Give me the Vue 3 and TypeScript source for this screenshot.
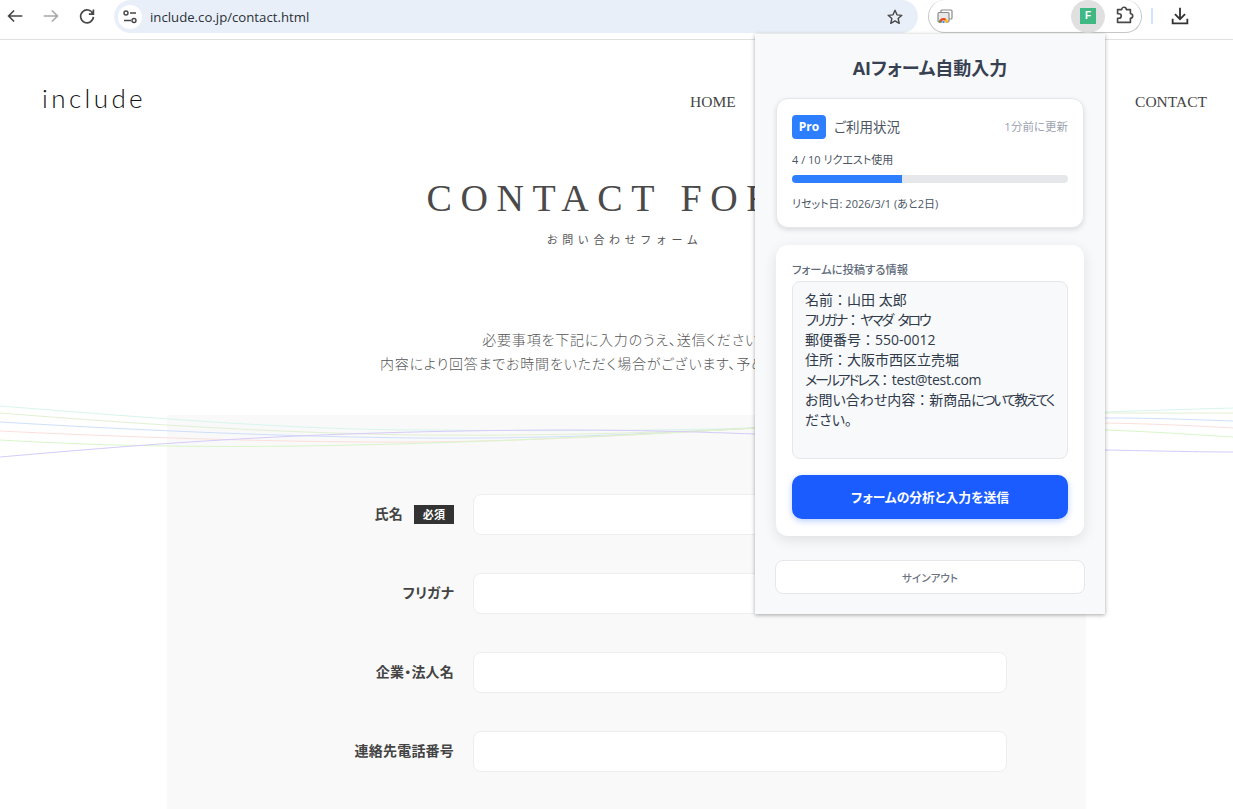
<script setup lang="ts">
import { ref } from 'vue'

const fields = [
  { label: '氏名', required: true },
  { label: 'フリガナ', required: false },
  { label: '企業・法人名', required: false },
  { label: '連絡先電話番号', required: false },
]

const waves = [
  { d: 'M0 406 C150 418 300 430 420 430 C540 431 640 431 755 428 C900 420 1000 414 1105 412 C1160 410 1200 409 1233 408', color: '#d8f5ed' },
  { d: 'M0 413 C150 425 280 433 420 435 C540 436 650 433 755 428 C900 418 1000 413 1105 413 L1233 413', color: '#e2f0d2' },
  { d: 'M0 422 C150 431 300 437 420 438 C540 439 650 434 755 428 C900 420 1000 418 1105 418 C1160 418 1200 420 1233 421', color: '#cfdffa' },
  { d: 'M0 431 C120 437 300 443 420 442 C540 441 650 434 755 428 C900 424 1000 423 1105 423 C1160 424 1200 426 1233 428', color: '#fbe0dc' },
  { d: 'M0 440 C120 447 220 447 300 446 C450 444 620 436 755 428 C900 425 1000 428 1105 430 C1160 432 1200 435 1233 437', color: '#d9f6ca' },
  { d: 'M0 457 C150 444 300 431 560 430 C640 430 700 432 755 434 C900 442 1000 447 1105 450 C1160 451 1200 452 1233 452', color: '#d6cbfa' },
]

const used = ref(4)
const limit = ref(10)
</script>

<template>
  <div class="window">
    <div class="toolbar">
      <svg class="nav-icon" viewBox="0 0 24 24"><path d="M20 12H5M11 6l-6 6 6 6" fill="none" stroke="#474747" stroke-width="1.8" /></svg>
      <svg class="nav-icon" viewBox="0 0 24 24"><path d="M4 12h15M13 6l6 6-6 6" fill="none" stroke="#a8a8a8" stroke-width="1.8" /></svg>
      <svg class="nav-icon" viewBox="0 0 24 24"><path d="M18.4 9.5A7 7 0 1 0 19 13M19 5v5h-5" fill="none" stroke="#474747" stroke-width="1.8" /></svg>
      <div class="omnibox">
        <span class="site-info">
          <svg viewBox="0 0 16 16" width="16" height="16">
            <circle cx="4" cy="4" r="2" fill="none" stroke="#474747" stroke-width="1.4" />
            <path d="M8 4h6M2 11.500h7" stroke="#474747" stroke-width="1.4" />
            <circle cx="12" cy="11.500" r="2" fill="none" stroke="#474747" stroke-width="1.4" />
          </svg>
        </span>
        <span class="url">include.co.jp/contact.html</span>
        <svg class="star" viewBox="0 0 24 24"><path d="M12 4l2.400 5.400 5.800.6-4.400 3.900 1.300 5.700L12 16.700l-5.100 2.900 1.300-5.700L3.800 10l5.800-.6z" fill="none" stroke="#474747" stroke-width="1.700" stroke-linejoin="round" /></svg>
      </div>
      <div class="ext-pill">
        <svg class="tab-icon" viewBox="0 0 16 14">
          <rect x="4" y="1" width="11" height="9" rx="1" fill="#fff" stroke="#8a8a8a" stroke-width="1.200" />
          <rect x="1" y="3.500" width="11" height="9.500" rx="1" fill="#e8e8e8" stroke="#8a8a8a" stroke-width="1.200" />
          <path d="M2 13.500a4.500 4.500 0 0 1 9 0z" fill="#fbbc04" />
          <path d="M2 13.500a4.500 4.500 0 0 1 7-3.700l-2.500 3.700z" fill="#ea4335" />
          <path d="M2 13.500a4.500 4.500 0 0 1 .8-2.500l2 2.500z" fill="#34a853" />
          <circle cx="6.500" cy="13" r="1.800" fill="#fff" />
          <circle cx="6.500" cy="13" r="1.200" fill="#4285f4" />
        </svg>
        <span class="ext-active"><span class="ext-badge">F</span></span>
        <svg class="puzzle" viewBox="0 0 24 24"><path d="M5 5h4.500a2.500 2.500 0 0 1 5 0H19v4.500a2.500 2.500 0 0 1 0 5V19h-4.500H5v-4.500h1.500a2.500 2.500 0 0 0 0-5H5z" fill="none" stroke="#474747" stroke-width="1.800" stroke-linejoin="round" /></svg>
      </div>
      <span class="divider"></span>
      <svg class="download" viewBox="0 0 24 24"><path d="M12 3v12M6.500 10l5.500 5.500 5.500-5.500M4 15v5h16v-5" fill="none" stroke="#333" stroke-width="2" /></svg>
    </div>

    <div class="site">
      <svg class="waves" viewBox="0 0 1233 60" width="1233" height="60">
        <g transform="translate(0 -400)">
          <path v-for="w in waves" :key="w.color" :d="w.d" :stroke="w.color" fill="none" stroke-width="1" />
        </g>
      </svg>

      <header class="site-header">
        <span class="logo">include</span>
        <nav class="site-nav">
          <a>HOME</a>
          <a>CONTACT</a>
        </nav>
      </header>

      <h1 class="title">CONTACT FORM</h1>
      <p class="subtitle">お問い合わせフォーム</p>
      <p class="lead">必要事項を下記に入力のうえ、送信ください。<br />内容により回答までお時間をいただく場合がございます、予めご了承ください。</p>

      <section class="form">
        <div v-for="f in fields" :key="f.label" class="form-row">
          <div class="form-label">
            <span class="form-label-text">{{ f.label }}</span>
            <span v-if="f.required" class="required">必須</span>
          </div>
          <input class="form-input" type="text" />
        </div>
      </section>
    </div>

    <div class="popup">
      <h2 class="popup-title">AIフォーム自動入力</h2>

      <div class="card usage">
        <div class="usage-head">
          <span class="plan">Pro</span>
          <span class="usage-title">ご利用状況</span>
          <span class="updated">1分前に更新</span>
        </div>
        <div class="usage-count">{{ used }} / {{ limit }} リクエスト使用</div>
        <div class="bar"><div class="bar-fill" :style="{ width: (used / limit) * 100 + '%' }"></div></div>
        <div class="reset">リセット日: 2026/3/1 (あと2日)</div>
      </div>

      <div class="card post">
        <div class="post-label">フォームに投稿する情報</div>
        <div class="post-text">
          <div>名前<span class="colon">：</span>山田 太郎</div>
          <div><span class="kana">フリガナ</span><span class="colon">：</span><span class="kana">ヤマダ タロウ</span></div>
          <div>郵便番号<span class="colon">：</span>550-0012</div>
          <div>住所<span class="colon">：</span>大阪市西区立売堀</div>
          <div><span class="kana">メールアドレス</span><span class="colon">：</span><span class="latin">test@test.com</span></div>
          <div>お問い合わせ内容<span class="colon">：</span>新商品<span class="tight">について教えてく</span></div>
          <div>ださい。</div>
        </div>
        <button class="submit">フォームの分析と入力を送信</button>
      </div>

      <button class="signout">サインアウト</button>
    </div>
  </div>
</template>

<style>
body {
  margin: 0;
  background: #fff;
}
</style>

<style scoped>
.window {
  position: relative;
  width: 1233px;
  height: 809px;
  overflow: hidden;
  background: #fff;
  font-family: "Open Sans", "Noto Sans CJK JP", sans-serif;
}

.toolbar {
  display: flex;
  align-items: flex-start;
  height: 39px;
  box-sizing: content-box;
  border-bottom: 1px solid #e0e0e0;
  padding-left: 4px;
}

.nav-icon {
  width: 22px;
  height: 22px;
  margin-top: 5px;
  margin-right: 14px;
}

.omnibox {
  display: flex;
  align-items: center;
  width: 804px;
  height: 33px;
  margin-left: 2px;
  box-sizing: border-box;
  padding-left: 4px;
  padding-right: 13px;
  background: #e9eff9;
  border-radius: 17px;
}

.site-info {
  display: flex;
  align-items: center;
  justify-content: center;
  width: 24px;
  height: 24px;
  border-radius: 50%;
  background: #fff;
}

.url {
  flex: 1;
  margin-left: 8px;
  font-size: 13.200px;
  color: #2b3138;
}

.star {
  width: 20px;
  height: 20px;
}

.ext-pill {
  display: flex;
  align-items: center;
  width: 214px;
  height: 33px;
  margin-left: 10px;
  box-sizing: border-box;
  padding: 0 4px 0 8px;
  background: #fff;
  border: 1px solid #c4c7c5;
  border-top: none;
  border-radius: 17px;
}

.tab-icon {
  width: 16px;
  height: 14px;
}

.ext-active {
  display: flex;
  align-items: center;
  justify-content: center;
  width: 34px;
  height: 33px;
  margin-left: auto;
  margin-right: 8px;
  border-radius: 50%;
  background: #e0e0e0;
}

.ext-badge {
  display: block;
  width: 16px;
  height: 16px;
  background: #3fb883;
  color: #fff;
  font: 700 10px/16px "Liberation Sans", sans-serif;
  text-align: center;
}

.puzzle {
  width: 22px;
  height: 22px;
  margin-right: 2px;
}

.divider {
  width: 2px;
  height: 16px;
  margin: 8px 16px 0 9px;
  background: #d3e3fd;
}

.download {
  width: 22px;
  height: 22px;
  margin-top: 5px;
}

.site {
  position: relative;
  width: 1249px;
  color: #444;
}

.waves {
  position: absolute;
  z-index: 1;
  top: 360px;
  left: 0;
  pointer-events: none;
}

.site-header {
  display: flex;
  justify-content: space-between;
  padding: 43px 42px 0;
  height: 90px;
  box-sizing: border-box;
}

.logo {
  font-family: Lato, sans-serif;
  font-weight: 300;
  font-size: 26px;
  line-height: 30px;
  letter-spacing: 3.400px;
  color: #111;
}

.site-nav {
  display: flex;
  justify-content: space-between;
  width: 517px;
  padding-top: 8px;
  font-family: "Liberation Serif", serif;
  font-size: 15.500px;
  line-height: 22px;
  color: #444;
}

.title {
  margin: 46px 0 0;
  text-align: center;
  font-family: "Liberation Serif", serif;
  font-weight: 400;
  font-size: 38px;
  line-height: 44px;
  letter-spacing: 8.600px;
  color: #4a4a4a;
}

.subtitle {
  margin: 12px 0 0;
  text-align: center;
  font-size: 11px;
  line-height: 16px;
  letter-spacing: 4.600px;
  color: #555;
}

.lead {
  margin: 80px 0 0;
  text-align: center;
  font-weight: 300;
  font-size: 14px;
  line-height: 24px;
  letter-spacing: 0.800px;
  color: #555;
  font-feature-settings: "palt";
}

.form {
  width: 919px;
  height: 394px;
  margin: 39px 0 0 167px;
  box-sizing: border-box;
  padding-top: 79px;
  background: #f9f9f9;
}

.form-row {
  display: flex;
  align-items: center;
  height: 41px;
  margin-bottom: 38px;
}

.form-label {
  display: flex;
  align-items: center;
  justify-content: flex-end;
  gap: 11px;
  width: 287px;
  font-size: 14px;
  font-weight: 700;
  letter-spacing: 0.200px;
  color: #444;
  font-feature-settings: "palt";
}

.form-label-text {
  margin-bottom: 4px;
}

.required {
  width: 40px;
  height: 19px;
  background: #333;
  color: #fff;
  font-size: 11px;
  line-height: 19px;
  text-align: center;
}

.form-input {
  width: 534px;
  height: 41px;
  margin-left: 19px;
  box-sizing: border-box;
  background: #fff;
  border: 1px solid #eee;
  border-radius: 8px;
}

.popup {
  position: absolute;
  z-index: 2;
  top: 34px;
  left: 755px;
  width: 350px;
  height: 580px;
  box-sizing: border-box;
  padding: 0 21px;
  background: #f8f9fb;
  box-shadow: 0 1px 4px rgba(0, 0, 0, 0.35);
  font-feature-settings: "palt";
}

.popup-title {
  margin: 0;
  padding-top: 21px;
  height: 64px;
  box-sizing: border-box;
  text-align: center;
  font-size: 18px;
  line-height: 26px;
  font-weight: 700;
  color: #374151;
}

.card {
  background: #fff;
  border-radius: 12px;
  box-sizing: border-box;
}

.usage {
  height: 130px;
  padding: 16px 15px;
  border: 1px solid #e5e7eb;
  box-shadow: 0 2px 5px rgba(0, 0, 0, 0.12);
}

.usage-head {
  display: flex;
  align-items: center;
  height: 24px;
}

.plan {
  width: 34px;
  height: 24px;
  border-radius: 4px;
  background: #2d7fff;
  color: #fff;
  font-size: 12px;
  font-weight: 700;
  line-height: 24px;
  text-align: center;
}

.usage-title {
  margin-left: 8px;
  margin-bottom: 2px;
  font-size: 13.500px;
  color: #4b5563;
}

.updated {
  margin-left: auto;
  margin-bottom: 2px;
  font-size: 11.500px;
  color: #9ca3af;
}

.usage-count {
  margin-top: 13px;
  font-size: 11px;
  line-height: 16px;
  color: #4b5563;
}

.bar {
  height: 8px;
  margin-top: 7px;
  border-radius: 4px;
  background: #e5e7eb;
  overflow: hidden;
}

.bar-fill {
  height: 100%;
  background: #2d7fff;
}

.reset {
  margin-top: 13px;
  font-size: 11px;
  line-height: 16px;
  color: #4b5563;
}

.post {
  height: 291px;
  margin-top: 17px;
  padding: 16px;
  box-shadow: 0 4px 14px rgba(0, 0, 0, 0.1);
}

.post-label {
  height: 20px;
  padding-top: 1px;
  box-sizing: border-box;
  font-size: 11.300px;
  line-height: 16px;
  font-weight: 500;
  color: #5f6b7a;
}

.post-text {
  width: 276px;
  height: 178px;
  box-sizing: border-box;
  padding: 8px 0 8px 12px;
  background: #f8f9fb;
  border: 1px solid #e5e7eb;
  border-radius: 8px;
  font-size: 14px;
  line-height: 20px;
  white-space: nowrap;
  color: #2f3a4a;
}

.colon {
  font-feature-settings: normal;
}

.kana {
  letter-spacing: -2.200px;
  word-spacing: 4px;
}

.latin {
  letter-spacing: -0.300px;
}

.tight {
  letter-spacing: -2.300px;
}

.submit {
  display: block;
  width: 276px;
  height: 44px;
  margin-top: 16px;
  padding-bottom: 2px;
  border: none;
  border-radius: 10px;
  background: #1a5cff;
  box-shadow: 0 2px 6px rgba(26, 92, 255, 0.3);
  color: #fff;
  font-family: inherit;
  font-size: 12.800px;
  font-feature-settings: "palt";
  font-weight: 700;
}

.signout {
  display: block;
  width: 310px;
  height: 34px;
  margin: 24px 0 0 -1px;
  background: #fff;
  border: 1px solid #e5e7eb;
  border-radius: 8px;
  font-family: inherit;
  font-size: 10.500px;
  font-feature-settings: "palt";
  font-weight: 500;
  color: #6b7280;
}
</style>
